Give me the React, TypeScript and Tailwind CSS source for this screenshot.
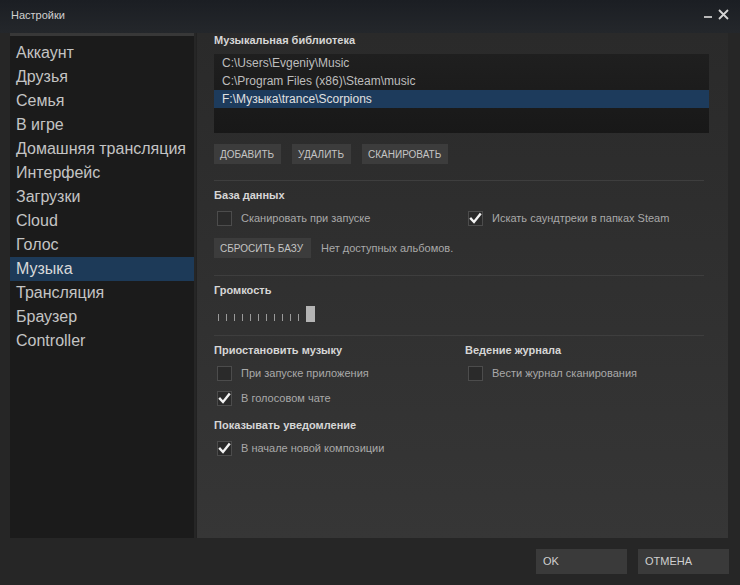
import React from 'react';

const menu = [
    'Аккаунт',
    'Друзья',
    'Семья',
    'В игре',
    'Домашняя трансляция',
    'Интерфейс',
    'Загрузки',
    'Cloud',
    'Голос',
    'Музыка',
    'Трансляция',
    'Браузер',
    'Controller',
];

const folders = ['C:\\Users\\Evgeniy\\Music', 'C:\\Program Files (x86)\\Steam\\music', 'F:\\Музыка\\trance\\Scorpions'];

const Check: React.FC<{ checked?: boolean; label: string }> = ({ checked, label }) => (
    <div className="flex items-center h-[16px] pl-[3px]">
        <div className="w-[15px] h-[15px] border border-[#4c4c4c] bg-[#2a2a2a] flex items-center justify-center">
            {checked && (
                <svg width="13" height="13" viewBox="0 0 13 13">
                    <path d="M2 6.8 L5 10 L11 2.5" fill="none" stroke="#f2f2f2" strokeWidth="2.4" strokeLinecap="square" />
                </svg>
            )}
        </div>
        <span className="ml-[9px] text-[11px] text-[#a9a9a9]">{label}</span>
    </div>
);

const Btn: React.FC<{ children: React.ReactNode; className?: string }> = ({ children, className }) => (
    <div className={`h-[20px] px-[6px] flex items-center bg-[#3c3c3c] text-[10px] text-[#c4c4c4] ${className ?? ''}`}>{children}</div>
);

const Heading: React.FC<{ children: React.ReactNode; className?: string }> = ({ children, className }) => (
    <div className={`text-[11px] leading-[14px] font-bold text-[#d6d6d6] ${className ?? ''}`}>{children}</div>
);

const Divider: React.FC<{ className?: string }> = ({ className }) => (
    <div className={`h-px bg-[#3e3e3e] mr-[5px] ${className ?? ''}`} />
);

export default function App() {
    return (
        <div
            className="w-[740px] h-[585px] flex flex-col bg-[#262626] overflow-hidden select-none"
            style={{ fontFamily: '"Liberation Sans", Arial, sans-serif' }}
        >
            {/* title bar */}
            <div className="h-[33px] flex items-center justify-between px-[11px] bg-gradient-to-b from-[#1b1e23] to-[#24272b]">
                <span className="text-[11px] text-[#d0d0d0] -mt-[2px]">Настройки</span>
                <div className="flex items-end gap-[6px] text-[#c8c8c8] -mt-[4px]">
                    <span className="w-[8px] h-[2px] bg-[#b8b8b8] mb-[2px]" />
                    <svg width="11" height="11" viewBox="0 0 11 11">
                        <path d="M1 1 L10 10 M10 1 L1 10" stroke="#d4d4d4" strokeWidth="1.8" />
                    </svg>
                </div>
            </div>

            {/* body */}
            <div className="flex-1 flex pl-[10px] pr-[12px] gap-[2px] min-h-0">
                {/* sidebar */}
                <div className="w-[184px] bg-[#1b1b1b] border-t-[3px] border-[#383838] pt-[5px]">
                    {menu.map((m) => (
                        <div
                            key={m}
                            className={`h-[24px] pl-[6px] flex items-center text-[16px] ${
                                m === 'Музыка' ? 'bg-[#1d3a58] text-[#d8d8d8]' : 'text-[#c4c4c4]'
                            }`}
                        >
                            {m}
                        </div>
                    ))}
                </div>

                {/* content */}
                <div className="flex-1 bg-gradient-to-b from-[#2a2a2a] to-[#363636] border-l border-[#222] pl-[17px] pr-[19px]">
                    <Heading>Музыкальная библиотека</Heading>
                    <div className="mt-[7px] h-[79px] bg-gradient-to-b from-[#1f1f1f] to-[#181818]">
                        {folders.map((f, i) => (
                            <div
                                key={f}
                                className={`h-[18px] pl-[8px] flex items-center text-[12px] ${
                                    i === 2 ? 'bg-[#1d3b5c] text-[#e0e0e0]' : 'text-[#bdbdbd]'
                                }`}
                            >
                                {f}
                            </div>
                        ))}
                    </div>
                    <div className="flex gap-[11px] mt-[11px]">
                        <Btn className="w-[67px]">ДОБАВИТЬ</Btn>
                        <Btn className="w-[59px]">УДАЛИТЬ</Btn>
                        <Btn className="w-[86px]">СКАНИРОВАТЬ</Btn>
                    </div>

                    <Divider className="mt-[16px]" />
                    <Heading className="mt-[7px]">База данных</Heading>
                    <div className="grid grid-cols-[251px_1fr] mt-[8px]">
                        <Check label="Сканировать при запуске" />
                        <Check checked label="Искать саундтреки в папках Steam" />
                    </div>
                    <div className="flex items-center mt-[12px]">
                        <Btn className="w-[97px]">СБРОСИТЬ БАЗУ</Btn>
                        <span className="ml-[10px] text-[11px] text-[#a9a9a9]">Нет доступных альбомов.</span>
                    </div>

                    <Divider className="mt-[17px]" />
                    <Heading className="mt-[7px]">Громкость</Heading>
                    <div className="flex items-end h-[16px] mt-[9px] pl-[4px]">
                        <div className="flex gap-[7px] mb-[1px]">
                            {Array.from({ length: 11 }).map((_, i) => (
                                <span key={i} className="w-px h-[7px] bg-[#9a9a9a]" />
                            ))}
                        </div>
                        <span className="ml-[7px] w-[9px] h-[16px] bg-[#b4b4b4]" />
                    </div>

                    <Divider className="mt-[13px]" />
                    <div className="grid grid-cols-[251px_1fr] mt-[7px]">
                        <div>
                            <Heading>Приостановить музыку</Heading>
                            <div className="mt-[8px]">
                                <Check label="При запуске приложения" />
                            </div>
                            <div className="mt-[9px]">
                                <Check checked label="В голосовом чате" />
                            </div>
                        </div>
                        <div>
                            <Heading>Ведение журнала</Heading>
                            <div className="mt-[8px]">
                                <Check label="Вести журнал сканирования" />
                            </div>
                        </div>
                    </div>
                    <Heading className="mt-[12px]">Показывать уведомление</Heading>
                    <div className="mt-[8px]">
                        <Check checked label="В начале новой композиции" />
                    </div>
                </div>
            </div>

            {/* footer */}
            <div className="h-[47px] flex justify-end items-start gap-[11px] pt-[11px] pr-[11px]">
                <div className="w-[91px] h-[25px] pl-[7px] flex items-center bg-[#3a3a3a] text-[11px] text-[#d0d0d0]">OK</div>
                <div className="w-[91px] h-[25px] pl-[7px] flex items-center bg-[#3a3a3a] text-[11px] text-[#d0d0d0]">ОТМЕНА</div>
            </div>
        </div>
    );
}
